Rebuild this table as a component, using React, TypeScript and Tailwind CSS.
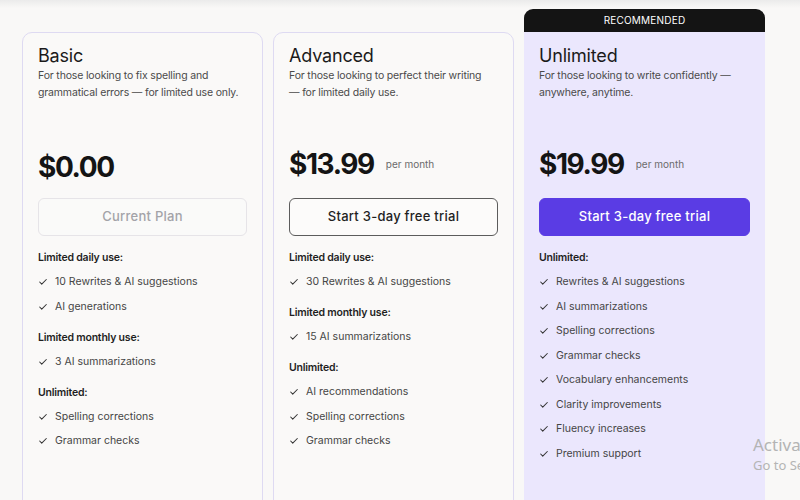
import { Check } from 'lucide-react';

type Group = { title: string; items: string[] };

type Plan = {
  name: string;
  desc: string[];
  price: string;
  perMonth: boolean;
  button: string;
  variant: 'current' | 'outline' | 'primary';
  groups: Group[];
  recommended?: boolean;
};

const plans: Plan[] = [
  {
    name: 'Basic',
    desc: ['For those looking to fix spelling and', 'grammatical errors — for limited use only.'],
    price: '$0.00',
    perMonth: false,
    button: 'Current Plan',
    variant: 'current',
    groups: [
      { title: 'Limited daily use:', items: ['10 Rewrites & AI suggestions', 'AI generations'] },
      { title: 'Limited monthly use:', items: ['3 AI summarizations'] },
      { title: 'Unlimited:', items: ['Spelling corrections', 'Grammar checks'] },
    ],
  },
  {
    name: 'Advanced',
    desc: ['For those looking to perfect their writing', '— for limited daily use.'],
    price: '$13.99',
    perMonth: true,
    button: 'Start 3-day free trial',
    variant: 'outline',
    groups: [
      { title: 'Limited daily use:', items: ['30 Rewrites & AI suggestions'] },
      { title: 'Limited monthly use:', items: ['15 AI summarizations'] },
      { title: 'Unlimited:', items: ['AI recommendations', 'Spelling corrections', 'Grammar checks'] },
    ],
  },
  {
    name: 'Unlimited',
    desc: ['For those looking to write confidently —', 'anywhere, anytime.'],
    price: '$19.99',
    perMonth: true,
    button: 'Start 3-day free trial',
    variant: 'primary',
    recommended: true,
    groups: [
      {
        title: 'Unlimited:',
        items: [
          'Rewrites & AI suggestions',
          'AI summarizations',
          'Spelling corrections',
          'Grammar checks',
          'Vocabulary enhancements',
          'Clarity improvements',
          'Fluency increases',
          'Premium support',
        ],
      },
    ],
  },
];

const buttonStyles = {
  current: 'border border-[#e6e4e8] text-[#a3a3a8] bg-[#fafaf9]',
  outline: 'border border-[#5c5c5c] text-[#1f1f1f] bg-[#fcfbfa]',
  primary: 'border border-[#5a3ce4] bg-[#5a3ce4] text-white',
};

function PlanCard({ plan }: { plan: Plan }) {
  return (
    <div className="w-[241px] flex flex-col">
      {plan.recommended && (
        <div className="h-[23px] bg-[#141414] rounded-t-[9px] flex items-center justify-center text-[10px] text-white tracking-[0.02em]">
          RECOMMENDED
        </div>
      )}
      <div
        className={
          plan.recommended
            ? 'h-[480px] bg-[#ebe7fd] px-[15px] pt-[13px]'
            : 'h-[480px] bg-[#faf9f8] border border-[#dedaf2] rounded-t-[10px] px-[15px] pt-[12px]'
        }
      >
        <h2 className="text-[18px] leading-[22px] text-[#1a1a1a] tracking-[-0.01em]">{plan.name}</h2>
        <p className="text-[10.5px] leading-[17px] text-[#4a4a4a] tracking-[-0.015em] h-[79px]">
          {plan.desc[0]}
          <br />
          {plan.desc[1]}
        </p>
        <div className={plan.perMonth ? 'flex items-center gap-[12px] h-[36px]' : 'flex items-center h-[36px] pt-[5px]'}>
          <span className="text-[28px] font-bold text-[#141414] tracking-[-0.05em]">{plan.price}</span>
          {plan.perMonth && <span className="text-[10px] text-[#6b6b6b]">per month</span>}
        </div>
        <div
          className={`mt-[16px] h-[38px] rounded-[6px] flex items-center justify-center text-[13px] font-medium tracking-[0.02em] ${buttonStyles[plan.variant]}`}
        >
          {plan.button}
        </div>
        <div className="mt-[14px] flex flex-col gap-[15px]">
          {plan.groups.map((g) => (
            <div key={g.title} className="flex flex-col">
              <div className="text-[10.5px] leading-[16px] font-semibold text-[#1f1f1f] tracking-[-0.02em]">{g.title}</div>
              <ul className="mt-[8px] flex flex-col gap-[8.5px]">
                {g.items.map((item) => (
                  <li key={item} className="flex items-center text-[10.5px] leading-[16px] text-[#454545]">
                    <Check className="w-[10px] h-[10px] text-[#333] mr-[7px] shrink-0" strokeWidth={2.5} />
                    {item}
                  </li>
                ))}
              </ul>
            </div>
          ))}
        </div>
      </div>
    </div>
  );
}

export default function App() {
  return (
    <div
      className="relative h-[500px] w-[800px] overflow-hidden bg-[#f9f8f7]"
      style={{ fontFamily: 'Inter, "Noto Sans", sans-serif' }}
    >
      <div className="h-[8px] bg-gradient-to-b from-[#ebebeb] to-[#f9f8f7]" />
      <div className="flex items-start gap-[10px] pl-[22px] pt-[1px]">
        <div className="mt-[23px]">
          <PlanCard plan={plans[0]} />
        </div>
        <div className="mt-[23px]">
          <PlanCard plan={plans[1]} />
        </div>
        <PlanCard plan={plans[2]} />
      </div>

      {/* Windows activation watermark */}
      <div className="absolute left-[753px] top-[434px] text-[#b4b4b4] whitespace-nowrap" style={{ fontFamily: '"Noto Sans", sans-serif' }}>
        <div className="text-[17px] leading-[22px]">Activate Windows</div>
        <div className="text-[13px] leading-[18px]">Go to Settings to activate Windows.</div>
      </div>
    </div>
  );
}
